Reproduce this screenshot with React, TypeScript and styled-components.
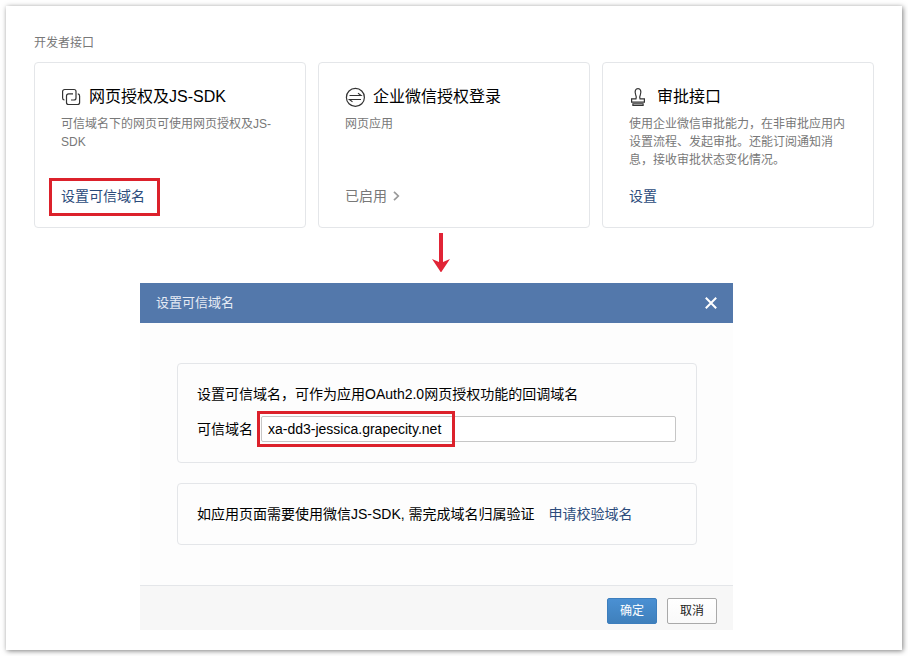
import React from "react";
import styled, { createGlobalStyle } from "styled-components";

const GlobalStyle = createGlobalStyle`
  *, *::before, *::after { box-sizing: border-box; }
  body {
    margin: 0;
    background: #fff;
    color: #000;
    font-family: "Liberation Sans", "Noto Sans CJK SC", sans-serif;
    font-size: 14px;
    line-height: 20px;
  }
  button, input { font: inherit; }
`;

const Page = styled.div`
  padding: 6px;
`;

const Sheet = styled.main`
  padding: 28px 28px 20px;
  background: #fff;
  box-shadow: 1px 1px 5px rgba(0, 0, 0, 0.5);
`;

const SectionTitle = styled.h2`
  margin: 0 0 10px;
  color: #787878;
  font-size: 12px;
  font-weight: 400;
  line-height: 18px;
`;

const CardGrid = styled.div`
  display: grid;
  grid-template-columns: repeat(3, minmax(0, 1fr));
  gap: 12px;
`;

const Card = styled.article`
  display: flex;
  flex-direction: column;
  align-items: flex-start;
  padding: 22px 26px 21px;
  border: 1px solid #e4e6e9;
  border-radius: 4px;
`;

const CardTitle = styled.h3`
  display: flex;
  align-items: center;
  gap: 8px;
  margin: 0 0 6px;
  font-size: 16px;
  font-weight: 400;
  line-height: 24px;
`;

const CardText = styled.p`
  flex: 1;
  min-height: 54px;
  margin: 0 0 17px;
  color: #787878;
  font-size: 12px;
  line-height: 18px;
`;

const Icon = styled.svg`
  flex: none;
  fill: none;
  stroke: #333;
  stroke-width: 1.2;
`;

const Link = styled.a<{ $muted?: boolean }>`
  display: inline-flex;
  align-items: center;
  gap: 6px;
  color: ${(p) => (p.$muted ? "#787878" : "#2b4b7b")};
  text-decoration: none;
`;

const Marked = styled.div`
  position: relative;
  display: flex;
`;

const Highlight = styled.span<{ $inset: string; $width?: string }>`
  position: absolute;
  inset: ${(p) => p.$inset};
  width: ${(p) => p.$width ?? "auto"};
  border: 3px solid #dc212b;
  pointer-events: none;
`;

const ArrowRow = styled.div`
  display: flex;
  justify-content: center;
  margin: 5px 132px 11px 106px;
`;

const Dialog = styled.section`
  margin: 0 141px 0 106px;
  background: #fdfdfd;
`;

const DialogHeader = styled.header`
  display: flex;
  align-items: center;
  justify-content: space-between;
  height: 40px;
  padding: 0 16px;
  background: #5378ab;
`;

const DialogTitle = styled.h2`
  margin: 0;
  color: #e6ecf5;
  font-size: 13px;
  font-weight: 400;
`;

const CloseButton = styled.button`
  display: flex;
  padding: 0;
  border: 0;
  background: none;
  cursor: pointer;
`;

const DialogBody = styled.div`
  display: flex;
  flex-direction: column;
  gap: 20px;
  padding: 40px 36px 40px 37px;
`;

const Box = styled.div`
  padding: 20px 20px 20px 19px;
  border: 1px solid #e4e6e9;
  border-radius: 4px;
`;

const Hint = styled.p`
  margin: 0 0 12px;
`;

const Field = styled.div`
  display: flex;
  align-items: center;
  gap: 8px;
`;

const InputWrap = styled.div`
  position: relative;
  flex: 1;
  display: flex;
`;

const TextInput = styled.input`
  flex: 1;
  min-width: 0;
  height: 26px;
  padding: 0 6px;
  border: 1px solid #c6c6c6;
  border-radius: 2px;
  background: #fff;
  color: #000;
`;

const VerifyRow = styled.div`
  display: flex;
  flex-wrap: wrap;
  column-gap: 14px;
`;

const DialogFooter = styled.footer`
  display: flex;
  justify-content: flex-end;
  gap: 10px;
  padding: 12px 16px 6px;
  border-top: 1px solid #e4e6e9;
  background: #f7f7f7;
`;

const Button = styled.button<{ $primary?: boolean }>`
  width: 50px;
  height: 26px;
  padding: 0;
  border: 1px solid ${(p) => (p.$primary ? "#3d7ebd" : "#a9a9a9")};
  border-radius: 2px;
  background: ${(p) =>
    p.$primary
      ? "linear-gradient(#4a90d3, #3f80bc)"
      : "linear-gradient(#fff, #f9f9f9)"};
  color: ${(p) => (p.$primary ? "#fff" : "#222")};
  font-size: 12px;
  cursor: pointer;
`;

const LinkedSquaresIcon = () => (
  <Icon width="20" height="20" viewBox="0 0 20 20" aria-hidden="true">
    <path d="M3.5 13A2 2 0 0 1 1.600 11V4.500a2 2 0 0 1 2-2H13a2 2 0 0 1 2 2V11a2 2 0 0 1-2 2H10" />
    <path d="M12 6.900H7.500a2 2 0 0 0-2 2v6.600a2 2 0 0 0 2 2h9.100a2 2 0 0 0 2-2V8.900a2 2 0 0 0-1.800-2" />
  </Icon>
);

const ExchangeIcon = () => (
  <Icon width="20" height="20" viewBox="0 0 20 20" aria-hidden="true">
    <circle cx="10.400" cy="10.400" r="9" />
    <path d="M4.500 8.500h11.500l-3-2.400M16 12.500H4.500l3 2.400" />
  </Icon>
);

const StampIcon = () => (
  <Icon width="20" height="20" viewBox="0 0 20 20" aria-hidden="true">
    <path d="M2.600 15.200v-3.400H7c.6-1.600.2-3-.4-4.400C5.400 4.200 6.600 1.700 9 1.700s3.600 2.500 2.400 5.700c-.6 1.400-1 2.800-.4 4.400h4.400v3.400z" />
    <path d="M3.900 16.800h10.200v1.700H3.900z" />
  </Icon>
);

const Chevron = () => (
  <svg width="7" height="10" viewBox="0 0 7 10" fill="none" stroke="#999" strokeWidth="1.7" aria-hidden="true">
    <path d="M1 .8 5.300 5 1 9.200" />
  </svg>
);

const DownArrow = () => (
  <svg width="18" height="39" viewBox="0 0 18 39" aria-hidden="true">
    <path d="M7 0h4v29l7-3-9 13.500L0 26l7 3z" fill="#e12436" />
  </svg>
);

const CloseIcon = () => (
  <svg width="12" height="12" viewBox="0 0 12 12" stroke="#fff" strokeWidth="2" aria-hidden="true">
    <path d="M.8.8l10.400 10.400M11.200.8.8 11.200" />
  </svg>
);

export default function App() {
  return (
    <>
      <GlobalStyle />
      <Page>
        <Sheet>
          <SectionTitle>开发者接口</SectionTitle>
          <CardGrid>
            <Card>
              <CardTitle><LinkedSquaresIcon />网页授权及JS-SDK</CardTitle>
              <CardText>可信域名下的网页可使用网页授权及JS-SDK</CardText>
              <Marked>
                <Link href="#domain">设置可信域名</Link>
                <Highlight $inset="-8px -15px -10px -12px" />
              </Marked>
            </Card>
            <Card>
              <CardTitle><ExchangeIcon />企业微信授权登录</CardTitle>
              <CardText>网页应用</CardText>
              <Link href="#login" $muted>已启用<Chevron /></Link>
            </Card>
            <Card>
              <CardTitle><StampIcon />审批接口</CardTitle>
              <CardText>使用企业微信审批能力，在非审批应用内设置流程、发起审批。还能订阅通知消息，接收审批状态变化情况。</CardText>
              <Link href="#approval">设置</Link>
            </Card>
          </CardGrid>

          <ArrowRow><DownArrow /></ArrowRow>

          <Dialog role="dialog" aria-labelledby="dialog-title">
            <DialogHeader>
              <DialogTitle id="dialog-title">设置可信域名</DialogTitle>
              <CloseButton type="button" aria-label="关闭"><CloseIcon /></CloseButton>
            </DialogHeader>
            <DialogBody>
              <Box>
                <Hint>设置可信域名，可作为应用OAuth2.0网页授权功能的回调域名</Hint>
                <Field>
                  <label htmlFor="domain-input">可信域名</label>
                  <InputWrap>
                    <TextInput id="domain-input" type="text" defaultValue="xa-dd3-jessica.grapecity.net" />
                    <Highlight $inset="-5px auto -5px -4px" $width="198px" />
                  </InputWrap>
                </Field>
              </Box>
              <Box>
                <VerifyRow>
                  <span>如应用页面需要使用微信JS-SDK, 需完成域名归属验证</span>
                  <Link href="#verify">申请校验域名</Link>
                </VerifyRow>
              </Box>
            </DialogBody>
            <DialogFooter>
              <Button type="button" $primary>确定</Button>
              <Button type="button">取消</Button>
            </DialogFooter>
          </Dialog>
        </Sheet>
      </Page>
    </>
  );
}
